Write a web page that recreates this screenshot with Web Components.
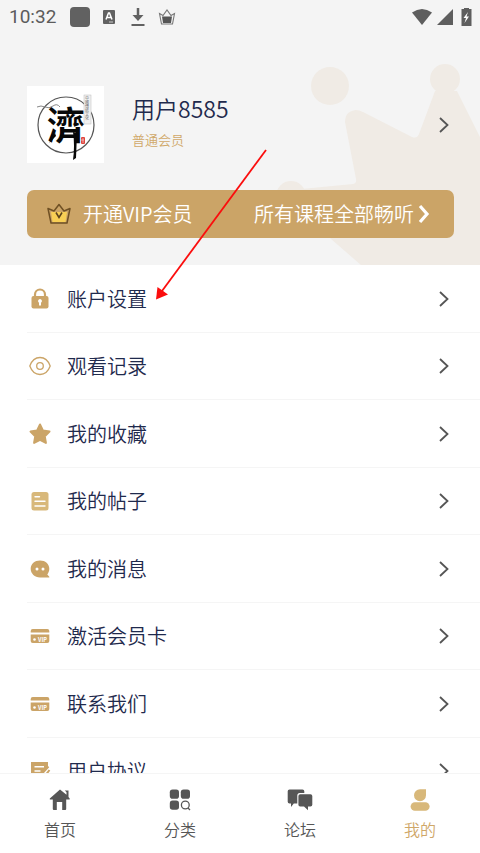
<!DOCTYPE html>
<html lang="zh-CN">
<head>
<meta charset="utf-8">
<meta name="viewport" content="width=device-width, initial-scale=1">
<title>我的</title>
<style>
  body {
    margin: 0;
    font-family: "Noto Sans CJK SC", Roboto, sans-serif;
    font-weight: 350;
    color: #1f2a4d;
    background: #fff;
  }
</style>
</head>
<body>
<member-page></member-page>

<script>
const ICONS = {
  lock: `<path d="M8 11V8.500a5 5 0 0 1 10 0V11" fill="none" stroke="#cba467" stroke-width="2.200"/>
    <rect x="4.500" y="10" width="17" height="12.500" rx="2" fill="#cba467"/>
    <path d="M13 13a2 2 0 0 1 1 3.700V19.500h-2V16.700A2 2 0 0 1 13 13z" fill="#fff"/>`,
  eye: `<path d="M2.800 13C5 7 9 4.500 13 4.500S21 7 23.200 13C21 19 17 21.500 13 21.500S5 19 2.800 13z" fill="none" stroke="#cba467" stroke-width="1.300"/>
    <circle cx="13" cy="13" r="3.300" fill="none" stroke="#cba467" stroke-width="1.300"/>`,
  star: `<path d="M13 3.500l3 6.100 6.500 1-4.700 4.700 1.100 6.600-5.900-3.100-5.900 3.100 1.100-6.600-4.700-4.700 6.500-1z" fill="#cba467" stroke="#cba467" stroke-width="2" stroke-linejoin="round"/>`,
  post: `<rect x="4.500" y="4" width="17" height="18.500" rx="2.500" fill="#d8b87a"/>
    <path d="M8 8.800h4.500M8 13.300h10M8 18h10M8 13.300h6" stroke="#fff" stroke-width="1.400" stroke-linecap="round"/>`,
  message: `<path d="M13 4.500c5.300 0 9.300 3.500 9.300 8.300 0 2.400-.8 4-2 5.600l2 2.300v.8H13c-5.300 0-9.300-3.900-9.300-8.700S7.700 4.500 13 4.500z" fill="#cba467"/>
    <circle cx="10" cy="13" r="1.500" fill="#fff"/><circle cx="16" cy="13" r="1.500" fill="#fff"/>`,
  card: `<path d="M3.700 9.500V8a2 2 0 0 1 2-2h14.600a2 2 0 0 1 2 2v1.500z" fill="#cba467"/>
    <path d="M3.700 11.500h18.600V18a2 2 0 0 1-2 2H5.700a2 2 0 0 1-2-2z" fill="#cba467"/>
    <circle cx="7.500" cy="16.500" r="1.300" fill="#fff"/>
    <text x="11" y="18.500" font-size="5.500" font-weight="700" fill="#fff">VIP</text>`,
  note: `<path d="M4 4h17v5l-9 9-1 3.500H6a2 2 0 0 1-2-2z" fill="#cba467"/>
    <path d="M7.500 8.800h9.500M7.500 13h6" stroke="#fff" stroke-width="1.500"/>
    <path d="M12 19l9.500-10.500M16 20.500l6.500-8.500" stroke="#cba467" stroke-width="2"/>`,
  home: `<path d="M13 2.500 2.800 11.500v1h3V22a1 1 0 0 0 1 1h3v-8h5.400v8h3a1 1 0 0 0 1-1v-9.500h3.500v-1L21.500 10V3.500h-3.700l1.700 1.700v2.600z" fill="#565656"/>`,
  grid: `<rect x="2.800" y="2.500" width="9.200" height="9.200" rx="2.800" fill="#565656"/>
    <rect x="13.800" y="2.500" width="9.200" height="9.200" rx="2.800" fill="#565656"/>
    <rect x="2.800" y="13.600" width="9.200" height="9.200" rx="2.800" fill="#565656"/>
    <circle cx="18.300" cy="18" r="3.900" fill="none" stroke="#565656" stroke-width="1.300"/>
    <path d="m21 21 2 2" stroke="#565656" stroke-width="1.300"/>`,
  forum: `<path d="M2.500 2.500h13a1.800 1.800 0 0 1 1.800 1.800V6h-4.500a2.500 2.500 0 0 0-2.500 2.500V16.500h-3.500L4 20v-3.500H2.500a1.800 1.800 0 0 1-1.800-1.800V4.300a1.800 1.800 0 0 1 1.800-1.800z" fill="#565656"/>
    <path d="M13.200 7.300h10.300A1.800 1.800 0 0 1 25.300 9v8.700a1.800 1.800 0 0 1-1.800 1.800H21v3.700l-4-3.700h-3.800a1.800 1.800 0 0 1-1.800-1.800V9a1.800 1.800 0 0 1 1.800-1.700z" fill="#565656"/>`,
  user: `<path d="M13 2.300h6v6a6 6 0 1 1-6-6z" fill="#d8b87a"/>
    <rect x="3.600" y="15.200" width="19" height="8.600" rx="4.300" fill="#d8b87a"/>`
};

const CHEVRON = `<svg class="chevron" width="10" height="16" viewBox="0 0 10 16" aria-hidden="true">
  <path d="M1 1l7.500 7L1 15" fill="none" stroke="currentColor" stroke-width="1.800"/></svg>`;

class StatusBar extends HTMLElement {
  constructor() {
    super();
    this.attachShadow({ mode: 'open' }).innerHTML = `
      <style>
        :host {
          display: flex;
          align-items: center;
          justify-content: space-between;
          height: 34px;
          padding: 0 5px 0 9px;
          box-sizing: border-box;
          color: #5c5c5c;
        }
        .group { display: flex; align-items: center; gap: 12px; }
        .right { gap: 4px; }
        time { font-family: Roboto, sans-serif; font-weight: 400; font-size: 19px; line-height: 24px; margin-right: 2px; }
        svg { display: block; }
      </style>
      <div class="group">
        <time>10:32</time>
        <svg width="20" height="20"><rect width="20" height="20" rx="4" fill="#616161"/></svg>
        <svg width="14" height="14" viewBox="0 0 14 14"><rect x="1" width="12" height="14" rx="1" fill="#616161"/>
          <path d="M4 9.500 6.500 3h1L10 9.500M5 7.500h4" fill="none" stroke="#fff" stroke-width="1.500"/><path d="M7 12h4" stroke="#ccc"/></svg>
        <svg width="18" height="20" viewBox="0 0 18 20"><path d="M10 1v9" stroke="#616161" stroke-width="2.500"/><path d="M4.500 8h11L10 14z" fill="#616161"/><path d="M3.500 18h13" stroke="#616161" stroke-width="2"/></svg>
        <svg width="18" height="18" viewBox="0 0 18 18"><path d="M1.500 5.500 5 7.500 9 2l4 5.500 3.500-2-2 10.500h-11z" fill="none" stroke="#777" stroke-width="1.100"/>
          <path d="M4 8.500h10l-1 6.500H5z" fill="#555"/></svg>
      </div>
      <div class="group right">
        <svg width="22" height="18" viewBox="0 0 22 18"><path d="M1 4.500q10-7 20 0L11 17z" fill="#5e5e5e"/></svg>
        <svg width="16" height="16" viewBox="0 0 16 16"><path d="M16 0v16H0z" fill="#5e5e5e"/></svg>
        <svg width="18" height="18" viewBox="0 0 18 18"><path d="M7 1V0h5v1h2.500v17h-10V1z" fill="#5e5e5e"/><path d="m11 4-4.500 6H9l-1.500 5L12 8.500H9.500z" fill="#fff"/></svg>
      </div>`;
  }
}

class UserAvatar extends HTMLElement {
  constructor() {
    super();
    this.attachShadow({ mode: 'open' }).innerHTML = `
      <style>
        :host { display: block; width: 77px; height: 77px; background: #fff; }
        svg { display: block; font-family: "Noto Sans CJK TC", "Noto Sans CJK SC", sans-serif; }
        .seal { writing-mode: vertical-rl; }
      </style>
      <svg width="77" height="77" viewBox="0 0 77 77">
        <circle cx="39" cy="39" r="28" fill="none" stroke="#555" stroke-width="1.200"/>
        <path d="M10 21q4-2 8 0t8-1 7 1" fill="none" stroke="#888" stroke-width="1"/>
        <rect x="57" y="9" width="7" height="29" fill="#f1f1f1" stroke="#bbb" stroke-width=".5"/>
        <text class="seal" x="60" y="10" font-size="4" fill="#666">中國傳統文化</text>
        <text x="20" y="53" font-size="38" font-weight="700" fill="#080808">濟</text>
        <path d="M46 46l4 1-1 25-3 2q2-14 0-28z" fill="#080808"/>
        <path d="M28 47l-6 10 7-7z" fill="#080808"/>
        <rect x="54" y="51" width="4" height="7" rx="1" fill="#df443d"/>
        <path d="M56 52v5M54 54h3" stroke="#fff" stroke-width=".5"/>
      </svg>`;
  }
}

class ProfileHeader extends HTMLElement {
  constructor() {
    super();
    this.attachShadow({ mode: 'open' }).innerHTML = `
      <style>
        :host { display: block; position: relative; background: #f4f4f4; overflow: hidden; }
        /* faint crown behind the profile */
        .crown { position: absolute; top: 0; right: 0; }
        .content { position: relative; padding-bottom: 27px; }
        .profile {
          display: flex;
          align-items: center;
          margin: 52px 31px 27px 27px;
          color: #555;
          text-decoration: none;
        }
        .names { flex: 1; margin-left: 28px; padding-bottom: 8px; }
        ::slotted([slot="name"]) { display: block; font-size: 23px; line-height: 32px; color: #1f2a4d; }
        ::slotted([slot="level"]) { display: block; margin-top: 6px; font-size: 13px; line-height: 20px; color: #d0a868; }
      </style>
      <svg class="crown" width="204" height="265" viewBox="276 0 204 265" fill="#f0ebe5" aria-hidden="true">
        <circle cx="330" cy="86" r="19"/>
        <circle cx="291" cy="196" r="15"/>
        <circle cx="445" cy="79" r="15"/>
        <path d="M291 190 353 184Q357 183 356 179L345 122Q345 111 356 110Q359 110 363 112L412 137Q417 139 419 134L435 91H457L480 137V265H361L300 212z"/>
      </svg>
      <div class="content">
        <status-bar></status-bar>
        <a class="profile" href="#profile">
          <user-avatar></user-avatar>
          <div class="names"><slot name="name"></slot><slot name="level"></slot></div>
          ${CHEVRON}
        </a>
        <slot></slot>
      </div>`;
  }
}

class VipBanner extends HTMLElement {
  constructor() {
    super();
    this.attachShadow({ mode: 'open' }).innerHTML = `
      <style>
        :host { display: block; margin: 0 26px 0 27px; }
        button {
          display: flex;
          align-items: center;
          width: 100%;
          height: 48px;
          padding: 0 24px 0 20px;
          border: 0;
          border-radius: 7px;
          background: #cba467;
          color: #fff;
          font: inherit;
          font-size: 20px;
          line-height: 28px;
          text-align: left;
        }
        .label { flex: 1; margin-left: 12px; }
        .arrow { margin-left: 4px; }
      </style>
      <button type="button">
        <svg width="24" height="24" viewBox="0 0 24 24" aria-hidden="true">
          <path d="M4 10h16l-1.500 10h-13z" fill="#f8cf55"/>
          <path d="M1 6.500 7 9l5-6.500L17 9l6-2.500-3 14.500H4z" fill="none" stroke="#6f5024" stroke-width="1.500" stroke-linejoin="round"/>
          <path d="m9 10.500 3 5 3-5" fill="none" stroke="#5c431d" stroke-width="1.600"/>
        </svg>
        <span class="label"><slot></slot></span>
        <span><slot name="note"></slot></span>
        <svg class="arrow" width="12" height="20" viewBox="0 0 12 20" aria-hidden="true">
          <path d="m2 2 7 8-7 8" fill="none" stroke="#fff" stroke-width="3.200"/></svg>
      </button>`;
  }
}

class MenuRow extends HTMLElement {
  constructor() {
    super();
    this.attachShadow({ mode: 'open' });
  }

  connectedCallback() {
    this.shadowRoot.innerHTML = `
      <style>
        :host { display: block; }
        a {
          display: flex;
          align-items: center;
          gap: 14px;
          height: 100%;
          box-sizing: border-box;
          margin-left: 27px;
          padding-right: 31px;
          border-bottom: 1px solid #f5f5f5;
          color: #1f2a4d;
          font-size: 20px;
          line-height: 28px;
          text-decoration: none;
        }
        .label { flex: 1; }
        .chevron { color: #555; }
      </style>
      <a href="#${this.getAttribute('icon')}">
        <svg width="26" height="26" viewBox="0 0 26 26" aria-hidden="true">${ICONS[this.getAttribute('icon')]}</svg>
        <span class="label"><slot></slot></span>
        ${CHEVRON}
      </a>`;
  }
}

class TabItem extends HTMLElement {
  constructor() {
    super();
    this.attachShadow({ mode: 'open' });
  }

  connectedCallback() {
    this.shadowRoot.innerHTML = `
      <style>
        :host { display: block; flex: 1; }
        a {
          display: flex;
          flex-direction: column;
          align-items: center;
          gap: 4px;
          padding-top: 13px;
          color: #565656;
          font-size: 16px;
          line-height: 24px;
          text-decoration: none;
        }
        :host([active]) a { color: #cfa768; }
      </style>
      <a href="#${this.getAttribute('icon')}">
        <svg width="26" height="26" viewBox="0 0 26 26" aria-hidden="true">${ICONS[this.getAttribute('icon')]}</svg>
        <slot></slot>
      </a>`;
  }
}

class MemberPage extends HTMLElement {
  constructor() {
    super();
    this.attachShadow({ mode: 'open' }).innerHTML = `
      <style>
        :host { display: flex; flex-direction: column; height: 100vh; position: relative; overflow: hidden; }
        main { flex: 1; min-height: 0; overflow-y: auto; scrollbar-width: none; }
        menu-row:nth-of-type(odd) { height: 68px; }
        menu-row:nth-of-type(even) { height: 67px; }
        nav { display: flex; height: 80px; box-sizing: border-box; border-top: 1px solid #f5f5f5; background: #fff; }
        /* red pointer lying over the page */
        .pointer { position: absolute; left: 150px; top: 145px; pointer-events: none; }
      </style>
      <main>
        <profile-header>
          <span slot="name">用户8585</span>
          <span slot="level">普通会员</span>
          <vip-banner>开通VIP会员<span slot="note">所有课程全部畅听</span></vip-banner>
        </profile-header>
        <menu-row icon="lock">账户设置</menu-row>
        <menu-row icon="eye">观看记录</menu-row>
        <menu-row icon="star">我的收藏</menu-row>
        <menu-row icon="post">我的帖子</menu-row>
        <menu-row icon="message">我的消息</menu-row>
        <menu-row icon="card">激活会员卡</menu-row>
        <menu-row icon="card">联系我们</menu-row>
        <menu-row icon="note">用户协议</menu-row>
      </main>
      <nav>
        <tab-item icon="home">首页</tab-item>
        <tab-item icon="grid">分类</tab-item>
        <tab-item icon="forum">论坛</tab-item>
        <tab-item icon="user" active>我的</tab-item>
      </nav>
      <svg class="pointer" width="120" height="160" viewBox="150 145 120 160" aria-hidden="true">
        <path d="M266 150 162 291" stroke="#fb0d0d" stroke-width="1.800"/>
        <path d="M156 299.500 157.500 287 168 294.500z" fill="#fb0d0d"/>
      </svg>`;
  }
}

customElements.define('status-bar', StatusBar);
customElements.define('user-avatar', UserAvatar);
customElements.define('profile-header', ProfileHeader);
customElements.define('vip-banner', VipBanner);
customElements.define('menu-row', MenuRow);
customElements.define('tab-item', TabItem);
customElements.define('member-page', MemberPage);
</script>
</body>
</html>
